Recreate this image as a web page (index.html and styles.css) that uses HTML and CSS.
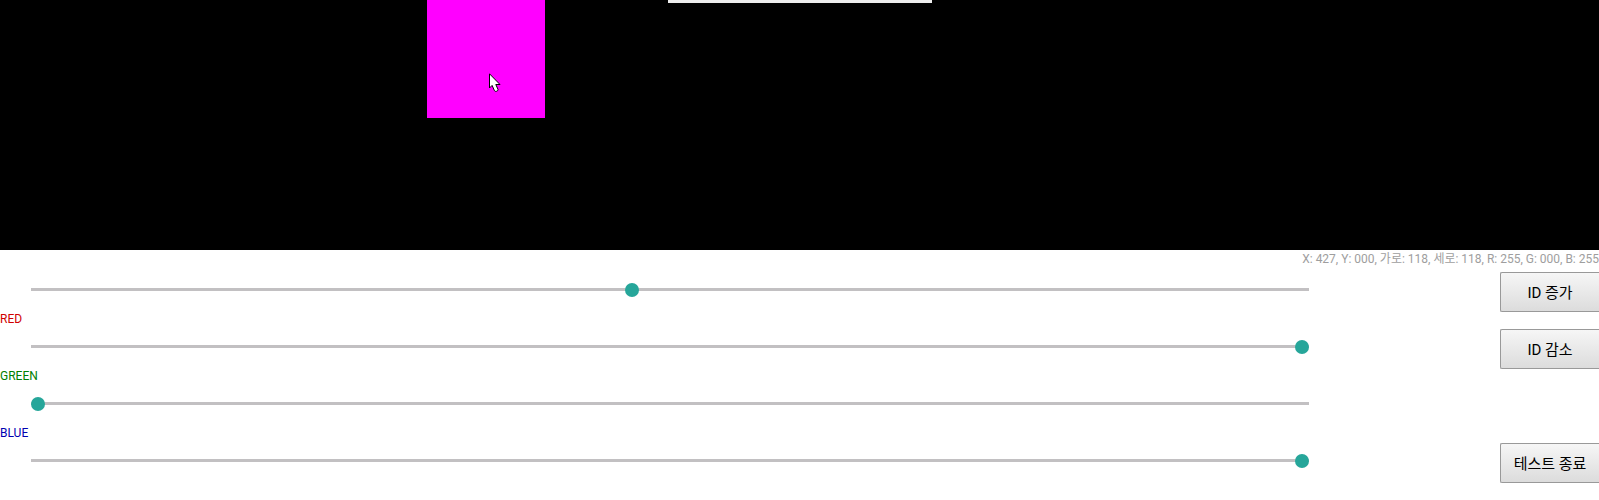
FILE: index.html
```html
<!DOCTYPE html>
<html lang="ko">
<head>
<meta charset="utf-8">
<title>ID Test</title>
<link rel="stylesheet" href="styles.css">
</head>
<body>
<main>
  <section class="stage">
    <div class="panel-edge"></div>
    <div class="marker"></div>
    <svg class="cursor" viewBox="0 0 12 19" aria-hidden="true">
      <path d="M.5 .8V15l2.6-2.6 2.3 5.2q1 1.200 2.400 .6t1.200-1.800L6.800 11.500h4.200z" fill="#fff" stroke="#000" stroke-linejoin="round"/>
    </svg>
  </section>
  <section class="controls">
    <div class="sliders">
      <div class="field">
        <div class="name"></div>
        <input class="range" type="range" min="0" max="909" value="427" aria-label="X">
      </div>
      <div class="field">
        <label class="name red" for="red">RED</label>
        <input class="range" id="red" type="range" min="0" max="255" value="255">
      </div>
      <div class="field">
        <label class="name green" for="green">GREEN</label>
        <input class="range" id="green" type="range" min="0" max="255" value="0">
      </div>
      <div class="field">
        <label class="name blue" for="blue">BLUE</label>
        <input class="range" id="blue" type="range" min="0" max="255" value="255">
      </div>
    </div>
    <div class="side">
      <output class="status">X: 427, Y: 000, 가로: 118, 세로: 118, R: 255, G: 000, B: 255</output>
      <div class="buttons">
        <button class="button" type="button">ID 증가</button>
        <button class="button" type="button">ID 감소</button>
        <button class="button finish" type="button">테스트 종료</button>
      </div>
    </div>
  </section>
</main>
</body>
</html>
```
FILE: styles.css
```css
* {
  box-sizing: border-box;
}

body {
  margin: 0;
  overflow-x: hidden;
  background: #fff;
  font-family: Roboto, "Noto Sans CJK KR", sans-serif;
  font-size: 12px;
  line-height: 16px;
}

.stage {
  position: relative;
  height: 250px;
  overflow: hidden;
  background: #000;
}

.panel-edge {
  width: 264px;
  height: 3px;
  margin: 0 auto;
  background: #eee;
}

.marker {
  position: absolute;
  top: 0;
  left: 427px;
  width: 118px;
  height: 118px;
  background: #f0f;
}

.cursor {
  position: absolute;
  top: 73px;
  left: 489px;
  width: 12px;
  height: 19px;
}

.controls {
  display: flex;
}

.sliders {
  flex: 1;
  padding-top: 4px;
}

.field {
  display: flex;
  flex-direction: column;
  height: 57px;
}

.name {
  height: 16px;
}

.red {
  color: #d00000;
}

.green {
  color: #008000;
}

.blue {
  color: #0000b0;
}

.range {
  appearance: none;
  height: 14px;
  margin: 13px 0 0 31px;
  background: linear-gradient(#c2c0c2, #c2c0c2) 0 5px / 100% 3px no-repeat;
}

.range::-webkit-slider-thumb {
  appearance: none;
  width: 14px;
  height: 14px;
  border: 0;
  border-radius: 50%;
  background: #26a69a;
}

.side {
  display: flex;
  flex-direction: column;
  width: 290px;
}

.status {
  align-self: flex-end;
  padding-top: 1px;
  color: #9e9e9e;
  white-space: nowrap;
}

.buttons {
  display: flex;
  flex-direction: column;
  align-items: flex-end;
  gap: 17px;
  padding-top: 5px;
}

.button {
  width: 99px;
  height: 40px;
  padding: 0 0 2px;
  border: 1px solid #999;
  border-right: 0;
  border-radius: 2px 0 0 2px;
  background: linear-gradient(#f6f6f6, #dcdcdc);
  color: #000;
  font-family: inherit;
  font-size: 15px;
}

.finish {
  margin-top: 57px;
}
```
